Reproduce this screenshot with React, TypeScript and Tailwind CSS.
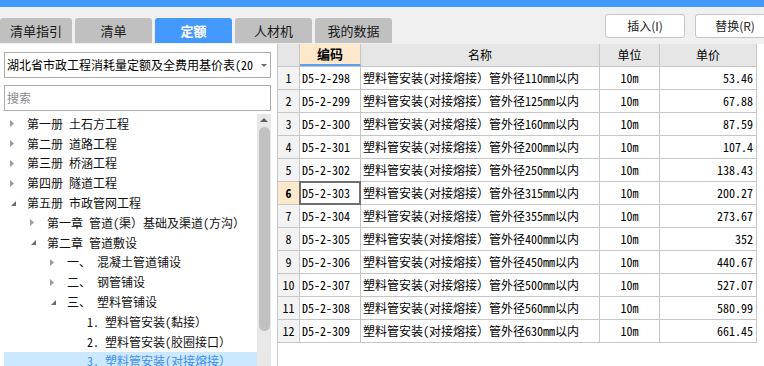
import React from "react";

type Node = { lvl: number; tri: "c" | "e" | null; text: string; sel?: boolean };

const tree: Node[] = [
  { lvl: 0, tri: "c", text: "第一册 土石方工程" },
  { lvl: 0, tri: "c", text: "第二册 道路工程" },
  { lvl: 0, tri: "c", text: "第三册 桥涵工程" },
  { lvl: 0, tri: "c", text: "第四册 隧道工程" },
  { lvl: 0, tri: "e", text: "第五册 市政管网工程" },
  { lvl: 1, tri: "c", text: "第一章 管道(渠）基础及渠道(方沟）" },
  { lvl: 1, tri: "e", text: "第二章 管道敷设" },
  { lvl: 2, tri: "c", text: "一、 混凝土管道铺设" },
  { lvl: 2, tri: "c", text: "二、 钢管铺设" },
  { lvl: 2, tri: "e", text: "三、 塑料管铺设" },
  { lvl: 3, tri: null, text: "1. 塑料管安装(黏接）" },
  { lvl: 3, tri: null, text: "2. 塑料管安装(胶圈接口）" },
  { lvl: 3, tri: null, text: "3. 塑料管安装(对接熔接）", sel: true },
];

const rows: [string, number, string][] = [
  ["D5-2-298", 110, "53.46"],
  ["D5-2-299", 125, "67.88"],
  ["D5-2-300", 160, "87.59"],
  ["D5-2-301", 200, "107.4"],
  ["D5-2-302", 250, "138.43"],
  ["D5-2-303", 315, "200.27"],
  ["D5-2-304", 355, "273.67"],
  ["D5-2-305", 400, "352"],
  ["D5-2-306", 450, "440.67"],
  ["D5-2-307", 500, "527.07"],
  ["D5-2-308", 560, "580.99"],
  ["D5-2-309", 630, "661.45"],
];

const tabs = ["清单指引", "清单", "定额", "人材机", "我的数据"];

function Tri({ t }: { t: "c" | "e" | null }) {
  if (t === "c")
    return (
      <svg width="4" height="7" viewBox="0 0 4 7" className="ml-[6px]">
        <polygon points="0,0 4,3.5 0,7" fill="#9c9c9c" />
      </svg>
    );
  if (t === "e")
    return (
      <svg width="5" height="5" viewBox="0 0 5 5" className="ml-[7px]">
        <polygon points="5,0 5,5 0,5" fill="#6a6a6a" />
      </svg>
    );
  return null;
}

export default function App() {
  return (
    <div className="w-[764px] h-[366px] overflow-hidden bg-white text-black font-['Noto_Sans_Mono_CJK_SC','Noto_Sans_CJK_SC',sans-serif]">
      <div className="h-[7px] bg-[#4299fb]" />
      <div className="h-[37px] bg-[#f0f0f0] flex items-start overflow-hidden">
        <div className="flex gap-[3px] mt-[11px] shrink-0">
          {tabs.map((t, i) => (
            <div
              key={t}
              className={
                (i === 0 ? "w-[72px] " : "w-[77px] ") +
                (i === 2
                  ? "bg-[#4499ff] text-white font-bold "
                  : "bg-[#c0c0c0] text-[#1a1a1a] ") +
                "h-[25px] rounded-t-[3px] flex items-center justify-center text-[13px] font-['Noto_Sans_CJK_SC',sans-serif]"
              }
            >
              {t}
            </div>
          ))}
        </div>
        <div className="flex gap-[10px] mt-[7px] ml-[213px] shrink-0">
          <div className="w-[80px] h-[24px] bg-white border border-[#c5c5c5] rounded-[3px] flex items-center justify-center text-[12px] font-['Noto_Sans_CJK_SC',sans-serif] text-[#222]">
            插入(I)
          </div>
          <div className="w-[80px] h-[24px] bg-white border border-[#c5c5c5] rounded-[3px] flex items-center justify-center text-[12px] font-['Noto_Sans_CJK_SC',sans-serif] text-[#222]">
            替换(R)
          </div>
        </div>
      </div>

      <div className="flex h-[322px]">
        {/* left panel */}
        <div className="w-[277px] shrink-0 bg-white flex flex-col">
          <div className="mt-[8px] ml-[4px] w-[267px] h-[26px] border border-[#acacac] flex items-center">
            <div className="w-[252px] whitespace-nowrap pl-[2px] text-[12px] leading-[14px]">
              湖北省市政工程消耗量定额及全费用基价表(20
            </div>
            <svg width="6" height="3" viewBox="0 0 6 3" className="ml-[4px]">
              <polygon points="0,0 6,0 3,3" fill="#6a6a6a" />
            </svg>
          </div>
          <div className="mt-[7px] ml-[4px] w-[267px] h-[26px] border border-[#acacac] flex items-center pl-[2px] text-[12px] text-[#8a8a8a]">
            搜索
          </div>
          <div className="mt-[3px] flex flex-1 min-h-0">
            <div className="ml-[4px] w-[253px] flex flex-col">
              {tree.map((n, i) => (
                <div
                  key={i}
                  className={
                    "h-[19.8px] shrink-0 flex items-center text-[12px] whitespace-nowrap " +
                    (n.sel ? "bg-[#cce8ff] text-[#3a8ff2]" : "text-[#111]")
                  }
                >
                  <div style={{ width: n.lvl * 20 }} className="shrink-0" />
                  <div className="w-[23px] shrink-0 flex items-center">
                    <Tri t={n.tri} />
                  </div>
                  <span>{n.text}</span>
                </div>
              ))}
            </div>
            <div className="w-[14px] bg-[#e8e8e8] flex flex-col items-start">
              <svg width="8" height="4" viewBox="0 0 8 4" className="mt-[4px] ml-[3px]">
                <polygon points="0,4 4,0 8,4" fill="#606060" />
              </svg>
              <div className="mt-[5px] ml-[1.5px] w-[11px] h-[204px] rounded-full bg-[#c1c1c1]" />
            </div>
          </div>
        </div>

        {/* right panel: table */}
        <div className="flex-1 border-l border-[#c6c6c6] bg-white">
          <div className="w-[479px] text-[12px]">
            <div className="flex h-[23px] border-b border-[#c6c6c6] bg-[#e6e6e6] font-['Noto_Sans_CJK_SC',sans-serif]">
              <div className="w-[22px] border-r border-[#c6c6c6]" />
              <div className="w-[61px] border-r border-[#c6c6c6] bg-[#fde8cc] border-b-2 border-b-[#5a9ff0] flex items-center justify-center font-bold text-[13px]">
                编码
              </div>
              <div className="w-[239px] border-r border-[#c6c6c6] flex items-center justify-center">名称</div>
              <div className="w-[60px] border-r border-[#c6c6c6] flex items-center justify-center">单位</div>
              <div className="w-[97px] border-r border-[#c6c6c6] flex items-center justify-center">单价</div>
            </div>
            {rows.map(([code, d, price], i) => {
              const sel = i === 5;
              return (
                <div key={code} className="flex h-[23px] border-b border-[#c6c6c6]">
                  <div
                    className={
                      "w-[22px] flex items-center justify-center border-r " +
                      (sel
                        ? "bg-[#fde8cc] font-bold border-r-[#4a94f0]"
                        : "bg-[#f3f3f3] border-[#c6c6c6]")
                    }
                  >
                    {i + 1}
                  </div>
                  <div className="w-[61px] border-r border-[#c6c6c6] flex items-center pl-[2px] relative">
                    {code}
                    {sel && <div className="absolute inset-[-1px] border-2 border-[#6f6f6f]" />}
                  </div>
                  <div className="w-[239px] border-r border-[#c6c6c6] flex items-center pl-[2px] whitespace-nowrap overflow-hidden">
                    塑料管安装(对接熔接）管外径{d}mm以内
                  </div>
                  <div className="w-[60px] border-r border-[#c6c6c6] flex items-center justify-center">10m</div>
                  <div className="w-[97px] border-r border-[#c6c6c6] flex items-center justify-end pr-[3px]">
                    {price}
                  </div>
                </div>
              );
            })}
          </div>
        </div>
      </div>
    </div>
  );
}
